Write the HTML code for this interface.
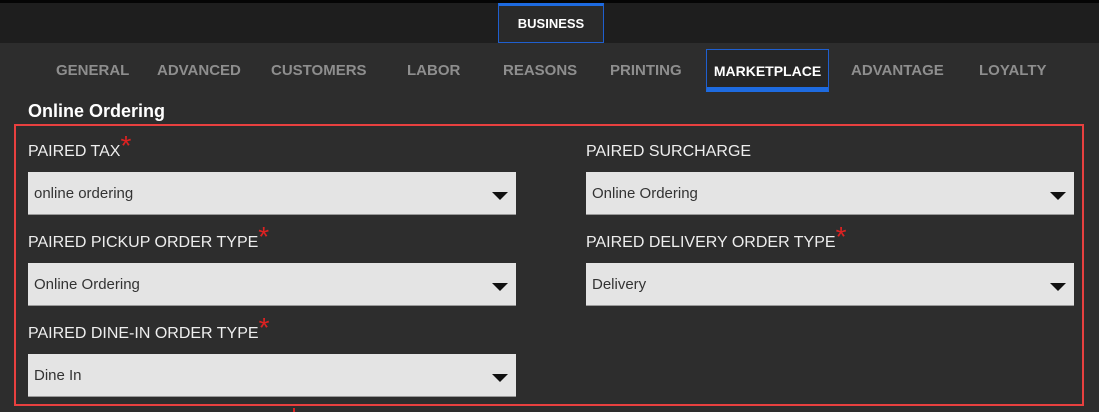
<!DOCTYPE html>
<html><head><style>
*{margin:0;padding:0;box-sizing:border-box}
body{width:1099px;height:412px;background:#2d2d2d;position:relative;overflow:hidden;font-family:"Liberation Sans",sans-serif}
.top{position:absolute;left:0;top:0;width:1099px;height:43px;background:#1e1e1e;border-top:3px solid #050505}
.biz{position:absolute;left:498px;top:3px;width:106px;height:40px;background:#2a2a2a;border:1px solid #1f5fcf;border-top:3px solid #1e6be0;color:#fff;font-weight:bold;font-size:13px;text-align:center;line-height:36px}
.tab{position:absolute;top:62px;font-weight:bold;font-size:15px;color:#8e8e8e}
.mk{position:absolute;left:706px;top:49px;width:123px;height:43px;border:1px solid #1f5fcf;border-bottom:5px solid #1e6be0;color:#fff;font-weight:bold;font-size:14px;text-align:center;line-height:42px;background:#262626}
h2{position:absolute;left:28px;top:101px;color:#fff;font-size:18px;font-weight:bold}
.box{position:absolute;left:14px;top:124px;width:1070px;height:282px;border:2px solid #e8403f}
.lbl{position:absolute;color:#eee;font-size:16px}
.lbl b{color:#d22;font-weight:normal;font-size:28px;position:relative;top:-1px;line-height:0}
.sel{position:absolute;width:488px;height:43px;background:#e4e4e4;border-bottom:1px solid #999;color:#333;font-size:15px;line-height:44px;padding-left:6px}
.sel:after{content:"";position:absolute;right:8px;top:20px;border-left:8px solid transparent;border-right:8px solid transparent;border-top:8px solid #111}
</style></head><body>
<div class="top"></div>
<div class="biz">BUSINESS</div>
<div class="tab" style="left:56px">GENERAL</div>
<div class="tab" style="left:157px">ADVANCED</div>
<div class="tab" style="left:271px">CUSTOMERS</div>
<div class="tab" style="left:407px">LABOR</div>
<div class="tab" style="left:503px">REASONS</div>
<div class="tab" style="left:610px">PRINTING</div>
<div class="mk">MARKETPLACE</div>
<div class="tab" style="left:851px">ADVANTAGE</div>
<div class="tab" style="left:979px">LOYALTY</div>
<h2>Online Ordering</h2>
<div class="box"></div>
<div class="lbl" style="left:28px;top:143px">PAIRED TAX<b>*</b></div>
<div class="lbl" style="left:586px;top:143px">PAIRED SURCHARGE</div>
<div class="sel" style="left:28px;top:172px">online ordering</div>
<div class="sel" style="left:586px;top:172px">Online Ordering</div>
<div class="lbl" style="left:28px;top:234px">PAIRED PICKUP ORDER TYPE<b>*</b></div>
<div class="lbl" style="left:586px;top:234px">PAIRED DELIVERY ORDER TYPE<b>*</b></div>
<div class="sel" style="left:28px;top:263px">Online Ordering</div>
<div class="sel" style="left:586px;top:263px">Delivery</div>
<div class="lbl" style="left:28px;top:325px">PAIRED DINE-IN ORDER TYPE<b>*</b></div>
<div class="sel" style="left:28px;top:354px">Dine In</div>
<div style="position:absolute;left:293px;top:408px;width:2px;height:4px;background:#d22"></div>
</body></html>
